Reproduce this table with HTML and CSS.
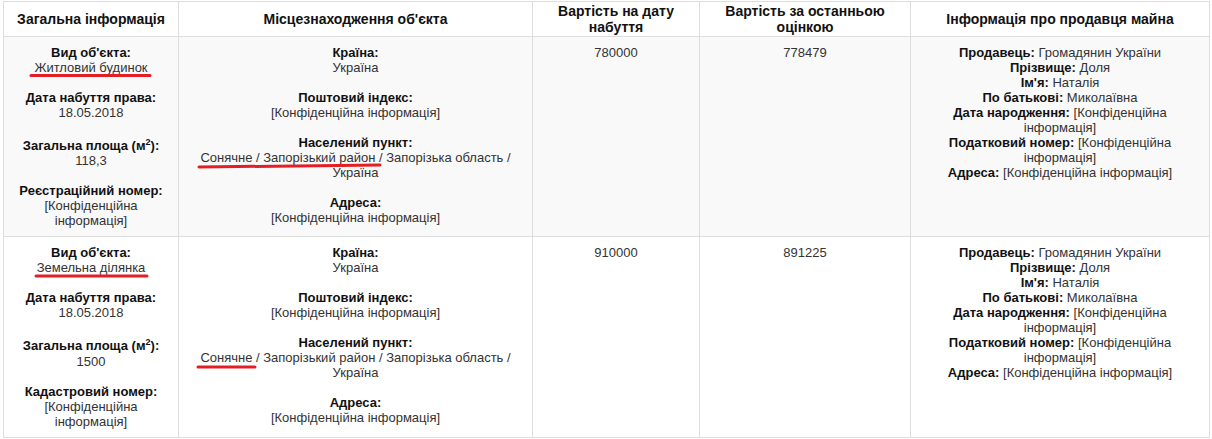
FILE: index.html
```html
<!DOCTYPE html>
<html lang="uk">
<head>
<meta charset="utf-8">
<title>Об'єкти нерухомості</title>
<link rel="stylesheet" href="styles.css">
</head>
<body>
<div class="page">
<table class="assets">
  <colgroup>
    <col class="c-general">
    <col class="c-location">
    <col class="c-cost">
    <col class="c-estimate">
    <col class="c-seller">
  </colgroup>
  <thead>
    <tr>
      <th>Загальна інформація</th>
      <th>Місцезнаходження об'єкта</th>
      <th>Вартість на дату набуття</th>
      <th>Вартість за останньою оцінкою</th>
      <th>Інформація про продавця майна</th>
    </tr>
  </thead>
  <tbody>
    <tr class="odd">
      <td>
        <div class="item"><div class="lbl">Вид об'єкта:</div><div class="val">Житловий будинок</div></div>
        <div class="item"><div class="lbl">Дата набуття права:</div><div class="val">18.05.2018</div></div>
        <div class="item"><div class="lbl">Загальна площа (м<sup>2</sup>):</div><div class="val">118,3</div></div>
        <div class="item"><div class="lbl">Реєстраційний номер:</div><div class="val">[Конфіденційна інформація]</div></div>
      </td>
      <td>
        <div class="item"><div class="lbl">Країна:</div><div class="val">Україна</div></div>
        <div class="item"><div class="lbl">Поштовий індекс:</div><div class="val">[Конфіденційна інформація]</div></div>
        <div class="item"><div class="lbl">Населений пункт:</div><div class="val">Сонячне / Запорізький район / Запорізька область / Україна</div></div>
        <div class="item"><div class="lbl">Адреса:</div><div class="val">[Конфіденційна інформація]</div></div>
      </td>
      <td><div class="val">780000</div></td>
      <td><div class="val">778479</div></td>
      <td>
        <div class="line"><span class="lbl">Продавець:</span> <span class="val">Громадянин України</span></div>
        <div class="line"><span class="lbl">Прізвище:</span> <span class="val">Доля</span></div>
        <div class="line"><span class="lbl">Ім'я:</span> <span class="val">Наталія</span></div>
        <div class="line"><span class="lbl">По батькові:</span> <span class="val">Миколаївна</span></div>
        <div class="line"><span class="lbl">Дата народження:</span> <span class="val">[Конфіденційна інформація]</span></div>
        <div class="line"><span class="lbl">Податковий номер:</span> <span class="val">[Конфіденційна інформація]</span></div>
        <div class="line"><span class="lbl">Адреса:</span> <span class="val">[Конфіденційна інформація]</span></div>
      </td>
    </tr>
    <tr class="even">
      <td>
        <div class="item"><div class="lbl">Вид об'єкта:</div><div class="val">Земельна ділянка</div></div>
        <div class="item"><div class="lbl">Дата набуття права:</div><div class="val">18.05.2018</div></div>
        <div class="item"><div class="lbl">Загальна площа (м<sup>2</sup>):</div><div class="val">1500</div></div>
        <div class="item"><div class="lbl">Кадастровий номер:</div><div class="val">[Конфіденційна інформація]</div></div>
      </td>
      <td>
        <div class="item"><div class="lbl">Країна:</div><div class="val">Україна</div></div>
        <div class="item"><div class="lbl">Поштовий індекс:</div><div class="val">[Конфіденційна інформація]</div></div>
        <div class="item"><div class="lbl">Населений пункт:</div><div class="val">Сонячне / Запорізький район / Запорізька область / Україна</div></div>
        <div class="item"><div class="lbl">Адреса:</div><div class="val">[Конфіденційна інформація]</div></div>
      </td>
      <td><div class="val">910000</div></td>
      <td><div class="val">891225</div></td>
      <td>
        <div class="line"><span class="lbl">Продавець:</span> <span class="val">Громадянин України</span></div>
        <div class="line"><span class="lbl">Прізвище:</span> <span class="val">Доля</span></div>
        <div class="line"><span class="lbl">Ім'я:</span> <span class="val">Наталія</span></div>
        <div class="line"><span class="lbl">По батькові:</span> <span class="val">Миколаївна</span></div>
        <div class="line"><span class="lbl">Дата народження:</span> <span class="val">[Конфіденційна інформація]</span></div>
        <div class="line"><span class="lbl">Податковий номер:</span> <span class="val">[Конфіденційна інформація]</span></div>
        <div class="line"><span class="lbl">Адреса:</span> <span class="val">[Конфіденційна інформація]</span></div>
      </td>
    </tr>
  </tbody>
</table>
<svg class="marks" width="1212" height="439" viewBox="0 0 1212 439" aria-hidden="true">
  <path d="M31 75.5 L150 75.5"/>
  <path d="M199 167 L380 165"/>
  <path d="M36 276 L147 276"/>
  <path d="M198 367 L255 367"/>
</svg>
</div>
</body>
</html>
```
FILE: styles.css
```css
html, body {
  margin: 0;
  padding: 0;
  background: #fff;
}

.page {
  position: relative;
  width: 1212px;
  height: 439px;
  overflow: hidden;
  padding: 1px 0 0 3px;
  box-sizing: border-box;
}

.assets {
  border-collapse: collapse;
  table-layout: fixed;
  width: 1207px;
  font-family: "Liberation Sans", Arial, sans-serif;
  font-size: 13px;
  line-height: 15px;
  color: #333;
}

.c-general { width: 175px; }
.c-location { width: 354px; }
.c-cost { width: 167px; }
.c-estimate { width: 211px; }
.c-seller { width: 299px; }

.assets th,
.assets td {
  border: 1px solid #ddd;
  text-align: center;
}

.assets th {
  font-size: 14px;
  line-height: 16px;
  font-weight: bold;
  color: #111;
  padding: 1px 8px;
  vertical-align: middle;
  background: #fff;
}

.assets td {
  padding: 8px 8px;
  vertical-align: top;
}

.odd td { background: #f9f9f9; }
.even td { background: #fff; }

.item + .item {
  margin-top: 15px;
}

.lbl {
  font-weight: bold;
  color: #111;
}

.val {
  color: #333;
}

sup {
  font-size: 9px;
  vertical-align: super;
}

.marks {
  position: absolute;
  top: 0;
  left: 0;
  pointer-events: none;
}

.marks path {
  fill: none;
  stroke: #e31e24;
  stroke-width: 3;
  stroke-linecap: round;
}
```
